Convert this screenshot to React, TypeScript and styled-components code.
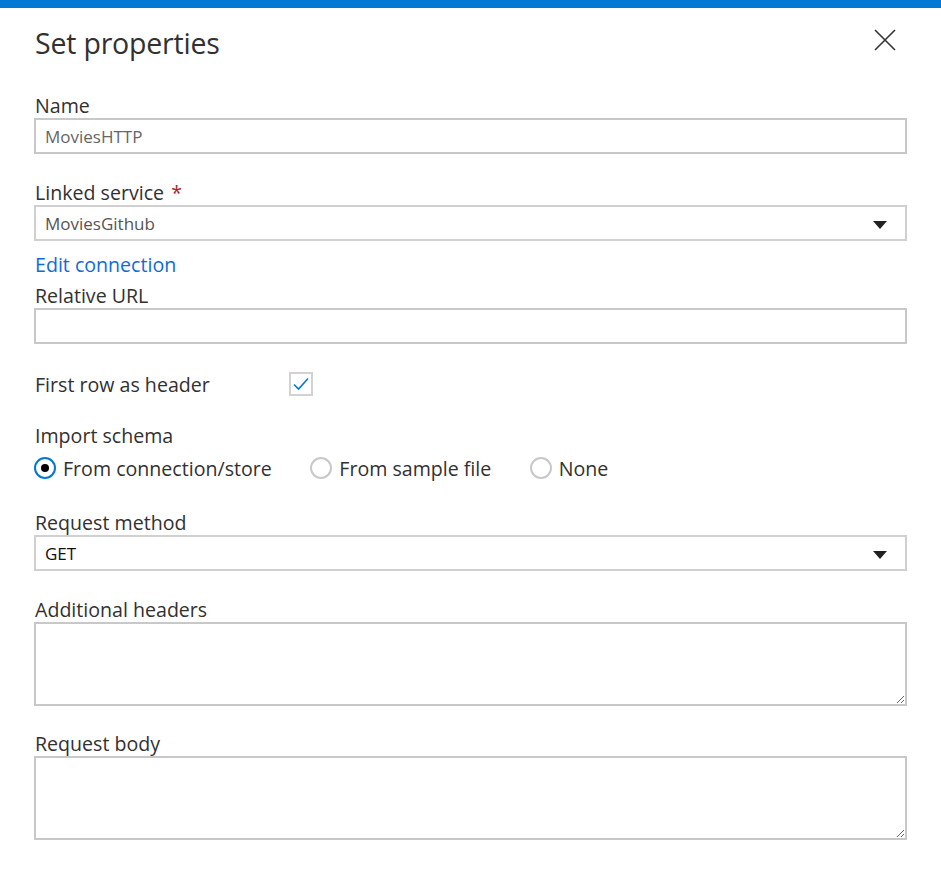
import { FC, ReactElement } from 'react'
import styled, { createGlobalStyle } from 'styled-components'

const GlobalStyle = createGlobalStyle`
  html, body {
    margin: 0;
    padding: 0;
    background: #ffffff;
  }
  body {
    font-family: 'Open Sans', 'Noto Sans', sans-serif;
    color: #323130;
  }
  * {
    box-sizing: border-box;
  }
`

const App: FC = (): ReactElement => {
  return (
    <>
      <GlobalStyle />
      <Panel>
        <TopBar />
        <Body>
          <Header>
            <Title>Set properties</Title>
            <CloseButton aria-label='Close'>
              <svg width='22' height='22' viewBox='0 0 22 22'>
                <path d='M1 1 L21 21 M21 1 L1 21' stroke='#333' strokeWidth='1.6' fill='none' />
              </svg>
            </CloseButton>
          </Header>

          <Field $top={0}>
            <Label>Name</Label>
            <TextBox value='MoviesHTTP' readOnly $muted />
          </Field>

          <Field>
            <Label>Linked service <Required>*</Required></Label>
            <Select $muted>
              <span>MoviesGithub</span>
              <Caret />
            </Select>
          </Field>

          <Link href='#'>Edit connection</Link>

          <Field $top={7}>
            <Label>Relative URL</Label>
            <TextBox defaultValue='' />
          </Field>

          <CheckRow>
            <span>First row as header</span>
            <CheckBox>
              <svg width='16' height='14' viewBox='0 0 16 14'>
                <path d='M1 7.5 L5.5 12 L15 1.5' stroke='#0078d4' strokeWidth='1.6' fill='none' />
              </svg>
            </CheckBox>
          </CheckRow>

          <Field $top={28}>
            <Label>Import schema</Label>
            <RadioGroup>
              <RadioOption>
                <Radio $checked />
                From connection/store
              </RadioOption>
              <RadioOption>
                <Radio />
                From sample file
              </RadioOption>
              <RadioOption>
                <Radio />
                None
              </RadioOption>
            </RadioGroup>
          </Field>

          <Field $top={31}>
            <Label>Request method</Label>
            <Select>
              <span>GET</span>
              <Caret />
            </Select>
          </Field>

          <Field>
            <Label>Additional headers</Label>
            <TextArea />
          </Field>

          <Field $top={26}>
            <Label>Request body</Label>
            <TextArea />
          </Field>
        </Body>
      </Panel>
    </>
  )
}

const Panel = styled.div`
  width: 941px;
  min-height: 881px;
  background: #fff;
`
const TopBar = styled.div`
  height: 8px;
  background: #0078d4;
`
const Body = styled.div`
  display: flex;
  flex-direction: column;
  padding: 0 34px;
`
const Header = styled.div`
  display: flex;
  align-items: flex-start;
  justify-content: space-between;
  height: 86px;
`
const Title = styled.h1`
  margin: 17px 0 0 1px;
  font-size: 28.5px;
  font-weight: 400;
  line-height: 36px;
  color: #323130;
  letter-spacing: -0.2px;
`
const CloseButton = styled.button`
  margin: 21px 11px 0 0;
  padding: 0;
  border: none;
  background: none;
  width: 22px;
  height: 22px;
  cursor: pointer;
`
const Field = styled.div<{ $top?: number }>`
  display: flex;
  flex-direction: column;
  margin-top: ${p => p.$top ?? 27}px;
`
const Label = styled.label`
  display: block;
  padding-left: 1px;
  font-size: 19.6px;
  line-height: 23px;
  height: 24px;
  color: #323130;
`
const Required = styled.span`
  color: #a4262c;
  margin-left: 2px;
`
const TextBox = styled.input<{ $muted?: boolean }>`
  width: 100%;
  height: 36px;
  border: 2px solid #c8c8c8;
  border-radius: 0;
  padding: 0 9px;
  font-family: 'Open Sans', 'Noto Sans', sans-serif;
  font-size: 17px;
  color: ${p => (p.$muted ? '#666' : '#222')};
  outline: none;
`
const Select = styled.div<{ $muted?: boolean }>`
  display: flex;
  align-items: center;
  justify-content: space-between;
  height: 36px;
  border: 2px solid #d0d0d0;
  padding: 0 18px 0 9px;
  font-size: 17px;
  color: ${p => (p.$muted ? '#555' : '#111')};
`
const Caret = styled.span`
  width: 0;
  height: 0;
  margin-top: 4px;
  border-left: 7px solid transparent;
  border-right: 7px solid transparent;
  border-top: 8px solid #222;
`
const Link = styled.a`
  margin-top: 12px;
  padding-left: 1px;
  font-size: 19.6px;
  line-height: 24px;
  color: #0f6cd6;
  text-decoration: none;
  align-self: flex-start;
`
const CheckRow = styled.div`
  display: flex;
  align-items: center;
  margin-top: 28px;
  height: 24px;
  padding-left: 1px;
  font-size: 19.6px;

  span {
    width: 254px;
  }
`
const CheckBox = styled.div`
  display: flex;
  align-items: center;
  justify-content: center;
  width: 24px;
  height: 24px;
  border: 2px solid #d2d2d2;
`
const RadioGroup = styled.div`
  display: flex;
  margin-top: 8px;
  gap: 38.5px;
  height: 24px;
`
const RadioOption = styled.label`
  display: flex;
  align-items: center;
  gap: 7px;
  font-size: 19.6px;
  color: #323130;
`
const Radio = styled.span<{ $checked?: boolean }>`
  position: relative;
  width: 22px;
  height: 22px;
  border-radius: 50%;
  border: 2px solid ${p => (p.$checked ? '#0078d4' : '#c8c8c8')};

  &::after {
    content: '';
    display: ${p => (p.$checked ? 'block' : 'none')};
    position: absolute;
    left: 5px;
    top: 5px;
    width: 8px;
    height: 8px;
    border-radius: 50%;
    background: #000;
  }
`
const TextArea = styled.textarea`
  width: 100%;
  height: 84px;
  border: 2px solid #c8c8c8;
  border-radius: 0;
  resize: vertical;
  outline: none;
  font-family: 'Open Sans', 'Noto Sans', sans-serif;
  display: block;
`

export default App
